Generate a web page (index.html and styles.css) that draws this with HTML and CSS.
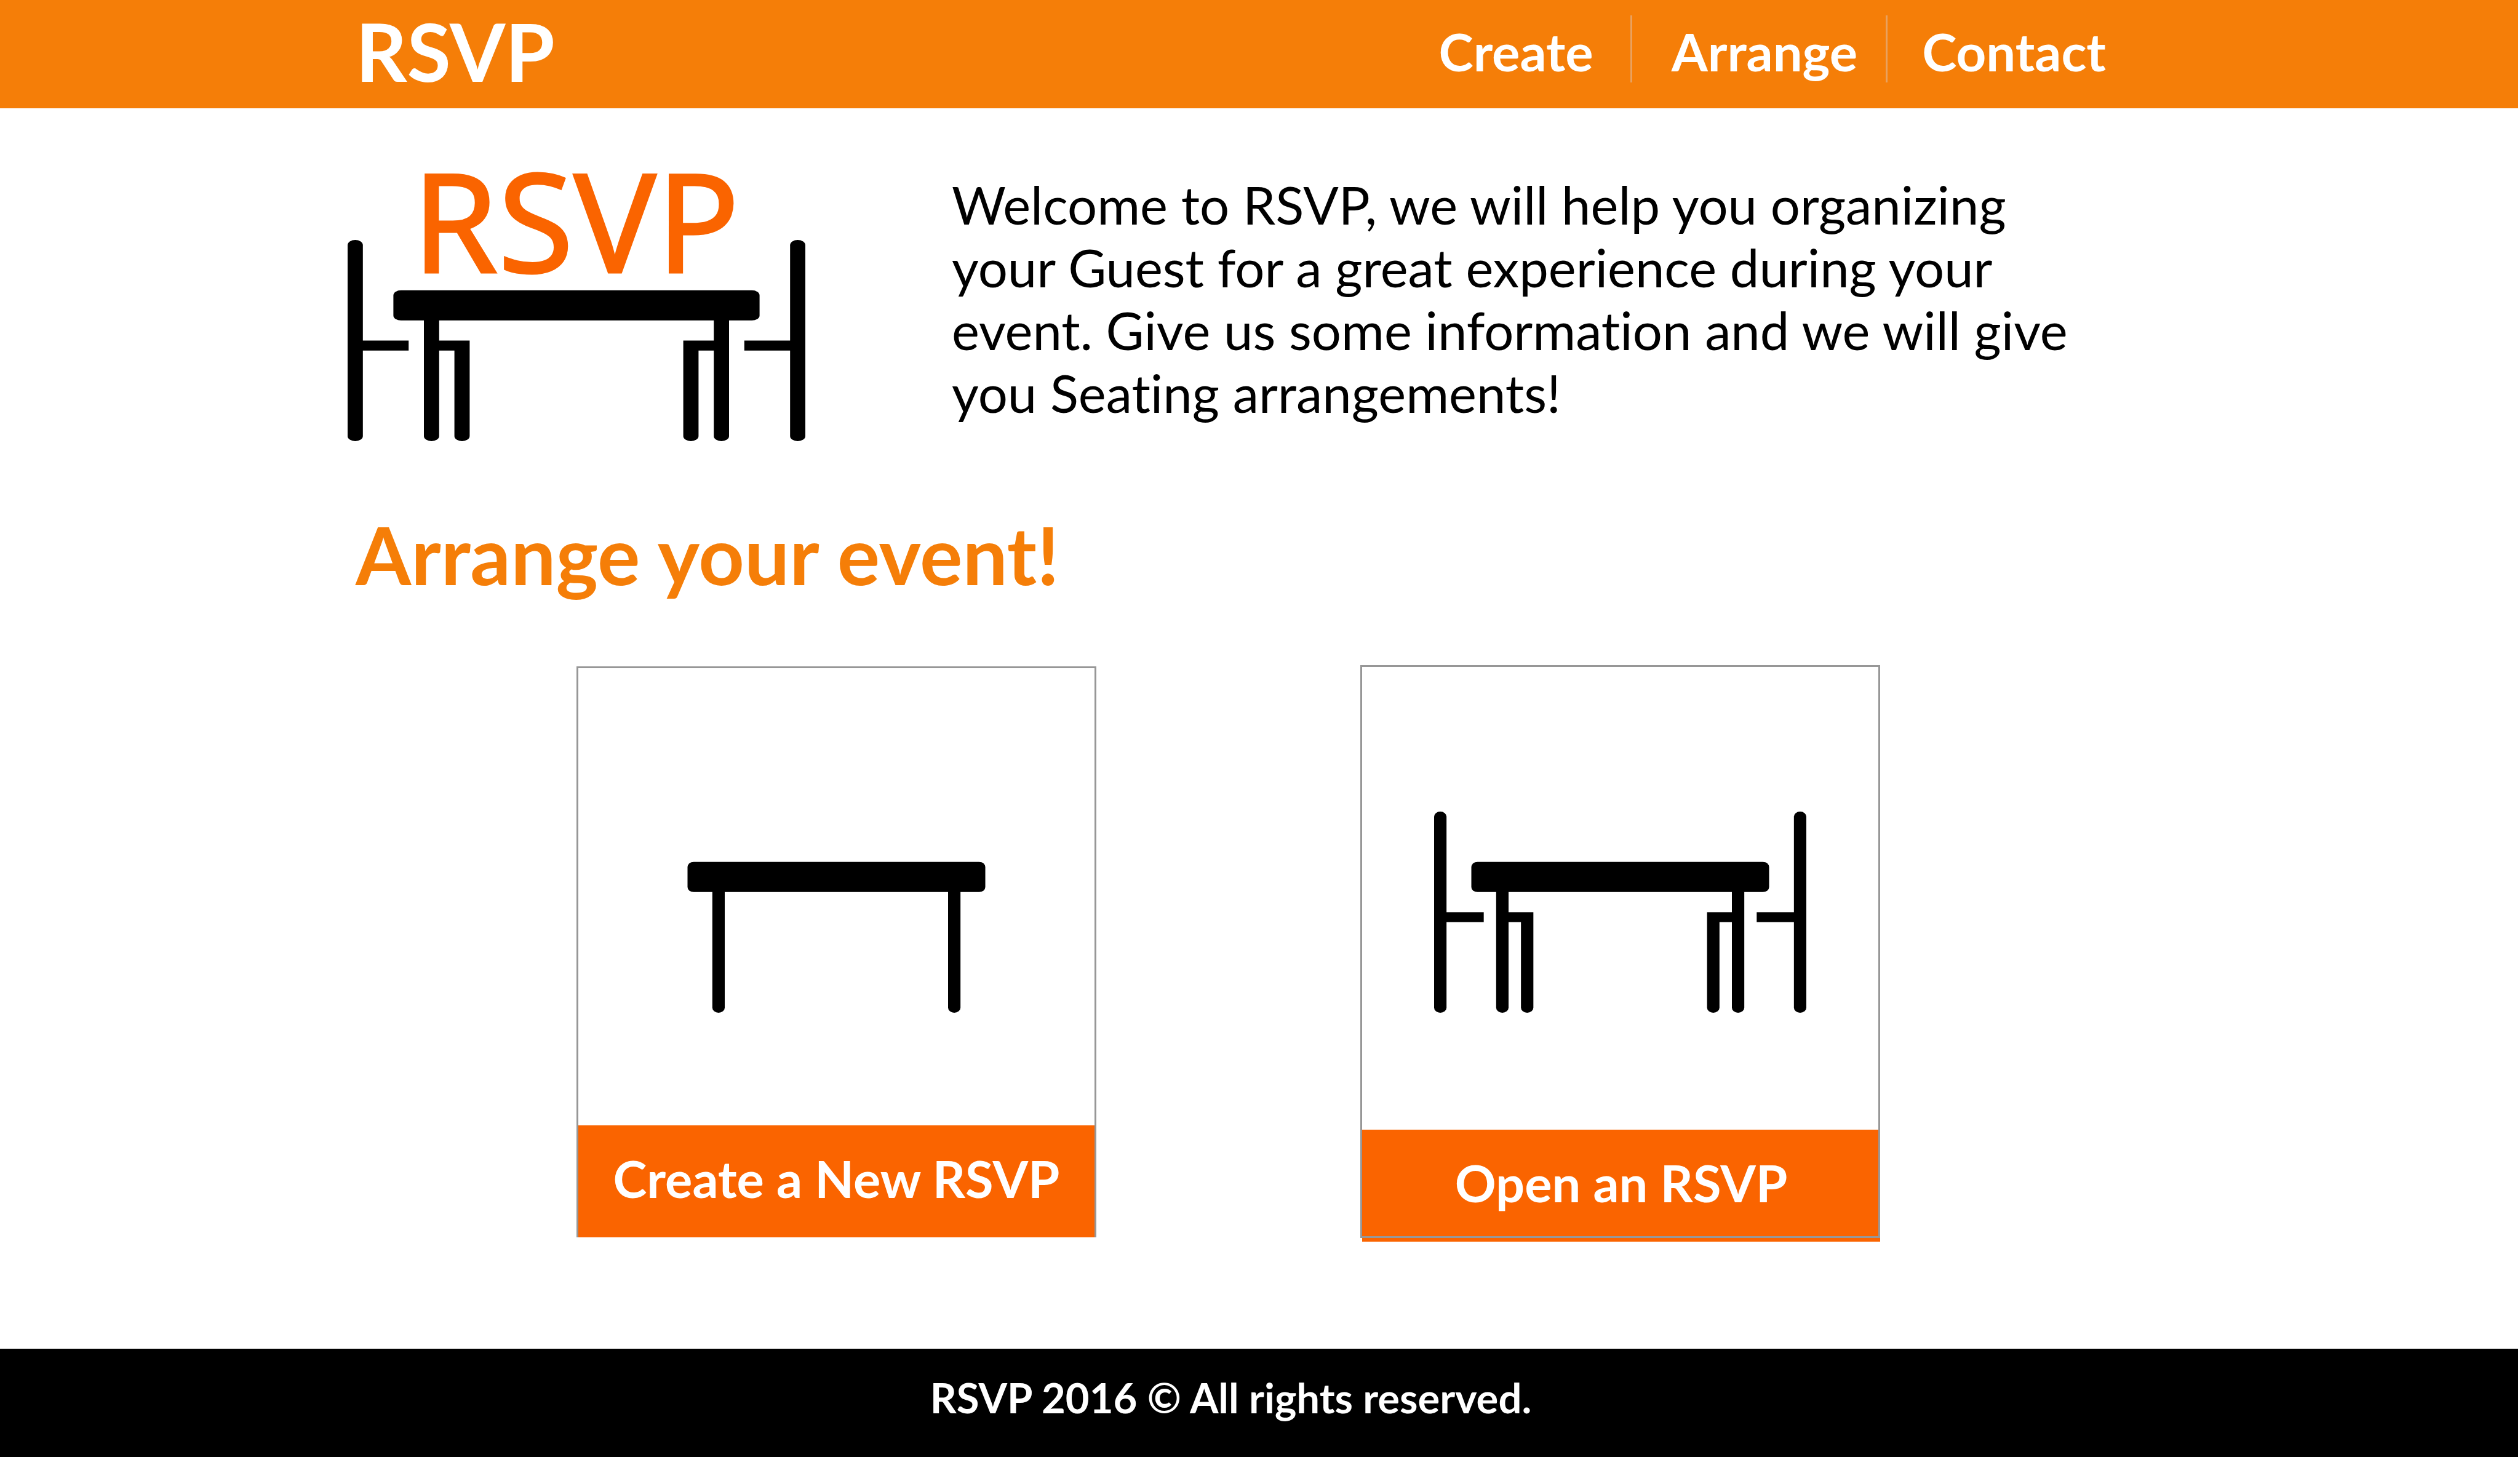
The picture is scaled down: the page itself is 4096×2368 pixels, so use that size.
FILE: index.html
```html
<!DOCTYPE html>
<html lang="en">
<head>
  <meta charset="utf-8">
  <meta name="viewport" content="width=device-width, initial-scale=1">
  <title>RSVP</title>
  <link rel="stylesheet" href="styles.css">
</head>
<body>
  <svg class="sprite" aria-hidden="true">
    <symbol id="table" viewBox="0 0 30 20" preserveAspectRatio="none">
      <rect x="3" y="5" width="24" height="3" rx=".5"/>
      <path d="M5 7.5h1v12a.5.5 0 0 1-1 0zM24 7.5h1v12a.5.5 0 0 1-1 0z"/>
    </symbol>
    <symbol id="chairs" viewBox="0 0 30 20" preserveAspectRatio="none">
      <rect x="0" y="0" width="1" height="20" rx=".5"/>
      <rect x="29" y="0" width="1" height="20" rx=".5"/>
      <path d="M.5 10H4v1H.5zM26 10h3.500v1H26z"/>
      <path d="M5.500 10H8v9.500a.5.5 0 0 1-1 0V11H5.500zM24.500 10H22v9.500a.5.5 0 0 0 1 0V11h1.500z"/>
    </symbol>
  </svg>

  <header class="site-header">
    <div class="container site-header__row">
      <a class="brand" href="#">RSVP</a>
      <nav class="nav" aria-label="Main">
        <a class="nav__link" href="#create">Create</a>
        <a class="nav__link" href="#arrange">Arrange</a>
        <a class="nav__link" href="#contact">Contact</a>
      </nav>
    </div>
  </header>

  <main class="main">
    <section class="intro">
      <svg class="intro__logo" viewBox="0 0 744 541" role="img" aria-label="RSVP table with two chairs">
        <text class="intro__logo-text" x="105" y="267">RSVP</text>
        <svg x="0" y="214" width="744" height="327">
          <use href="#table" width="744" height="327"/>
          <use href="#chairs" width="744" height="327"/>
        </svg>
      </svg>
      <p class="intro__text">Welcome to RSVP, we will help you organizing your Guest for a great experience during your event. Give us some information and we will give you Seating arrangements!</p>
    </section>

    <h1 class="container title">Arrange your event!</h1>

    <section class="cards">
      <a class="card card--create" href="#create">
        <svg class="card__icon" viewBox="0 0 605 327" aria-hidden="true">
          <use href="#table" width="605" height="327"/>
        </svg>
        <span class="card__label">Create a New RSVP</span>
      </a>
      <a class="card card--open" href="#open">
        <svg class="card__icon" viewBox="0 0 605 327" aria-hidden="true">
          <use href="#table" width="605" height="327"/>
          <use href="#chairs" width="605" height="327"/>
        </svg>
        <span class="card__label">Open an RSVP</span>
      </a>
    </section>
  </main>

  <footer class="site-footer">
    <p class="container site-footer__text">RSVP 2016 © All rights reserved.</p>
  </footer>
</body>
</html>
```
FILE: styles.css
```css
* {
  box-sizing: border-box;
}

body {
  display: flex;
  flex-direction: column;
  min-height: 100vh;
  margin: 0;
  padding-right: 3px;
  background: #fff;
  color: #000;
  font-family: Lato, sans-serif;
  font-size: 85px;
  line-height: 102px;
  font-variant-ligatures: none;
}

a {
  color: inherit;
  text-decoration: none;
}

.sprite {
  position: absolute;
  width: 0;
  height: 0;
}

.container {
  padding-left: 578px;
  padding-right: 670px;
}

/* Header */
.site-header {
  padding-top: 6px;
  padding-bottom: 16px;
  background: #f57e08;
  color: #fff;
  font-weight: 700;
}

.site-header__row {
  display: flex;
  justify-content: space-between;
  align-items: flex-start;
}

.brand {
  font-size: 130px;
  line-height: 154px;
}

.nav {
  display: flex;
  margin-top: 19px;
}

.nav__link {
  padding: 7px 46px 0 64px;
  height: 109px;
  border-left: 3px solid #e9a15f;
}

.nav__link:first-child {
  padding-left: 0;
  padding-right: 60px;
  border-left: 0;
}

.nav__link:last-child {
  padding-left: 56px;
  padding-right: 0;
}

/* Introduction */
.main {
  flex: 1;
}

.intro {
  display: flex;
  align-items: flex-start;
  gap: 238px;
  padding: 0 670px 0 565px;
}

.intro__logo {
  flex: none;
  width: 744px;
  height: 541px;
}

.intro__logo-text {
  fill: #fa6400;
  stroke: #fa6400;
  stroke-width: 3px;
  font-family: "Noto Sans", sans-serif;
  font-size: 224px;
}

.intro__text {
  flex: 1;
  margin: 0;
  padding-top: 105px;
}

.title {
  margin: 107px 0 0;
  color: #f57e08;
  font-size: 130px;
  line-height: 154px;
  font-weight: 700;
}

/* Cards */
.cards {
  display: flex;
  align-items: flex-start;
  gap: 429px;
  padding: 103px 670px 0 937px;
}

.card {
  position: relative;
  display: flex;
  flex-direction: column;
  width: 845px;
  border: 3px solid #979797;
  border-bottom: 0;
}

.card__icon {
  align-self: center;
  width: 605px;
  height: 327px;
}

.card__label {
  padding: 35px 0 45px;
  background: #fa6400;
  color: #fff;
  font-size: 83px;
  font-weight: 700;
  text-align: center;
}

.card--create {
  margin-top: 2px;
}

.card--create .card__icon {
  margin: 233px 0 183px;
}

.card--open {
  border-color: transparent;
}

.card--open .card__icon {
  margin: 235px 0 190px;
}

.card--open .card__label {
  margin-right: -3px;
}

/* The frame of this card runs over its label */
.card--open::after {
  content: "";
  position: absolute;
  inset: -3px -3px 6px;
  border: 3px solid #979797;
}

/* Footer */
.site-footer {
  padding: 38px 0 56px;
  background: #000;
  color: #fff;
}

.site-footer__text {
  margin: 0;
  font-size: 67px;
  line-height: 82px;
  font-weight: 700;
  text-align: center;
}
```
